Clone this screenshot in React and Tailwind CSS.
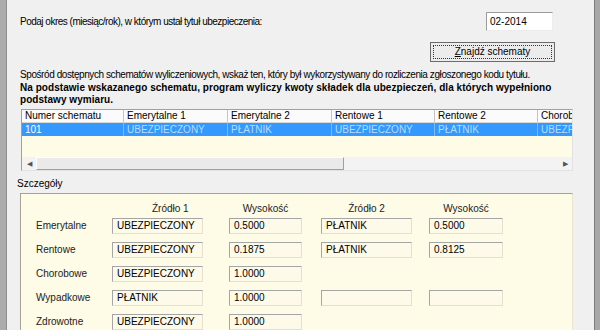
import React from 'react'

const cols = [
  { w: 'w-[102px]', head: 'Numer schematu', val: '101', first: true },
  { w: 'w-[104px]', head: 'Emerytalne 1', val: 'UBEZPIECZONY' },
  { w: 'w-[104px]', head: 'Emerytalne 2', val: 'PŁATNIK' },
  { w: 'w-[103px]', head: 'Rentowe 1', val: 'UBEZPIECZONY' },
  { w: 'w-[103px]', head: 'Rentowe 2', val: 'PŁATNIK' },
  { w: 'w-[60px]', head: 'Chorobowe 1', val: 'UBEZPIECZONY' },
]

const rows = [
  { label: 'Emerytalne', s1: 'UBEZPIECZONY', w1: '0.5000', s2: 'PŁATNIK', w2: '0.5000' },
  { label: 'Rentowe', s1: 'UBEZPIECZONY', w1: '0.1875', s2: 'PŁATNIK', w2: '0.8125' },
  { label: 'Chorobowe', s1: 'UBEZPIECZONY', w1: '1.0000', s2: null, w2: null },
  { label: 'Wypadkowe', s1: 'PŁATNIK', w1: '1.0000', s2: '', w2: '' },
  { label: 'Zdrowotne', s1: 'UBEZPIECZONY', w1: '1.0000', s2: null, w2: null },
]

function Field({ w, value }) {
  if (value === null) return <div className={`${w} shrink-0`} />
  return (
    <div
      className={`${w} shrink-0 h-[16px] border border-t-[#a5a5a5] border-l-[#a5a5a5] border-b-[#e4e0cc] border-r-[#e4e0cc] bg-[#fdfae9] pl-[4px] leading-[14px] text-black whitespace-nowrap overflow-hidden`}
    >
      {value}
    </div>
  )
}

export default function App() {
  return (
    <div className="w-[600px] h-[330px] overflow-hidden flex bg-[#f0f0f0] text-[10px] leading-[12px] text-black font-['Liberation_Sans',Arial,sans-serif]">
      {/* lewa ramka okna */}
      <div className="w-[7px] shrink-0 bg-[#acacac] border-r border-[#8e8e8e]" />

      <div className="flex-1 min-w-0 overflow-hidden flex flex-col">
        {/* okres */}
        <div className="flex items-center justify-between pt-[12px] pl-[13px] pr-[41px]">
          <span className="tracking-[-0.5px]">Podaj okres (miesiąc/rok), w którym ustał tytuł ubezpieczenia:</span>
          <div className="w-[67px] h-[19px] bg-white border border-t-[#9c9c9c] border-l-[#9c9c9c] border-b-[#ececec] border-r-[#ececec] pl-[3px] leading-[17px]">
            02-2014
          </div>
        </div>

        {/* przycisk */}
        <div className="flex justify-end pr-[39px] mt-[11px]">
          <button className="w-[125px] h-[20px] border border-[#6b6b6b] bg-[#ececec] p-[2px]">
            <div className="h-full border border-dotted border-[#333] flex items-center justify-center leading-[12px]">
              <span><span className="underline">Z</span>najdź schematy</span>
            </div>
          </button>
        </div>

        {/* opis */}
        <div className="pl-[13px] mt-[7px]">
          <p className="tracking-[-0.42px] whitespace-nowrap">
            Spośród dostępnych schematów wyliczeniowych, wskaż ten, który był wykorzystywany do rozliczenia zgłoszonego kodu tytułu.
          </p>
          <p className="font-bold tracking-[0.05px] mt-[1px] w-[540px]">
            Na podstawie wskazanego schematu, program wyliczy kwoty składek dla ubezpieczeń, dla których wypełniono podstawy wymiaru.
          </p>
        </div>

        {/* tabela schematów */}
        <div className="ml-[14px] mr-[21px] mt-[3px] h-[67px] flex flex-col border border-t-[#a0a0a0] border-l-[#a0a0a0] border-r-[#e2e2e2] border-b-[#e2e2e2] bg-[#fefbe7] overflow-hidden">
          <div className="flex h-[13px] bg-[#fbfbfb] border-b border-[#d8d8d8]">
            {cols.map((c) => (
              <div key={c.head} className={`${c.w} shrink-0 border-r border-[#c4c4c4] pl-[3px] leading-[12px] whitespace-nowrap overflow-hidden`}>
                {c.head}
              </div>
            ))}
          </div>
          <div className="flex h-[13px] bg-[#3399fe]">
            {cols.map((c) => (
              <div
                key={c.head}
                className={`${c.w} shrink-0 border-r border-[#7fbcf5] pl-[3px] leading-[13px] whitespace-nowrap overflow-hidden ${c.first ? 'text-white' : 'text-[#b9ddff]'}`}
              >
                {c.val}
              </div>
            ))}
          </div>
          <div className="flex-1" />
          <div className="h-[13px] flex bg-[#f3f3f3]">
            <div className="w-[14px] flex items-center justify-center text-[7px] text-[#555]">◀</div>
            <div className="w-[308px] bg-[#eaeaea] border border-t-white border-l-white border-r-[#a0a0a0] border-b-[#a0a0a0]" />
            <div className="flex-1" />
            <div className="w-[14px] flex items-center justify-center text-[7px] text-[#555]">▶</div>
          </div>
        </div>

        {/* szczegóły */}
        <div className="pl-[10px] mt-[7px] leading-[12px]">Szczegóły</div>

        <div className="ml-[13px] mr-[21px] mt-[3px] flex-1 bg-[#fefbe7] border-t border-l border-[#a8a390] border-r border-r-[#e8e4d0] pl-[15px] pt-[9px]">
          <div className="flex h-[12px] text-[#222]">
            <div className="w-[76px] shrink-0" />
            <div className="w-[91px] shrink-0 pl-[40px]">Źródło 1</div>
            <div className="w-[26px] shrink-0" />
            <div className="w-[73px] shrink-0 text-center">Wysokość</div>
            <div className="w-[19px] shrink-0" />
            <div className="w-[91px] shrink-0 text-center">Źródło 2</div>
            <div className="w-[17px] shrink-0" />
            <div className="w-[74px] shrink-0 text-center">Wysokość</div>
          </div>
          <div className="flex flex-col gap-[8px] mt-[3px]">
            {rows.map((r) => (
              <div key={r.label} className="flex items-center">
                <div className="w-[76px] shrink-0 text-[#222]">{r.label}</div>
                <Field w="w-[91px]" value={r.s1} />
                <div className="w-[26px] shrink-0" />
                <Field w="w-[73px]" value={r.w1} />
                <div className="w-[19px] shrink-0" />
                <Field w="w-[91px]" value={r.s2} />
                <div className="w-[17px] shrink-0" />
                <Field w="w-[74px]" value={r.w2} />
              </div>
            ))}
          </div>
        </div>
      </div>

      {/* prawa ramka okna */}
      <div className="w-[6px] shrink-0 bg-[#a8a8a8] border-l border-[#7c7c7c]" />
    </div>
  )
}
